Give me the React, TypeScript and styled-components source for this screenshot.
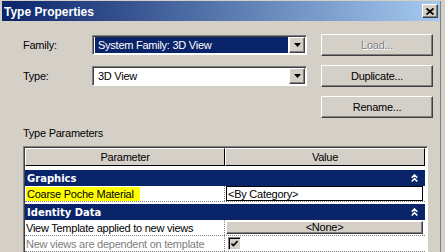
import styled, {createGlobalStyle} from 'styled-components';

const GlobalStyle = createGlobalStyle`
  html, body {
    margin: 0;
    padding: 0;
    background: #d4d0c8;
  }
  body {
    font-family: "Liberation Sans", Arial, sans-serif;
    font-size: 11px;
    letter-spacing: -0.25px;
    color: #000;
  }
`;

const Dialog = styled.div`
  width: 445px;
  height: 252px;
  overflow: hidden;
  background: #d4d0c8;
  padding: 1px 0 0 2px;
  box-sizing: border-box;
`;

const Frame = styled.div`
  width: 439px;
  height: 260px;
  border-right: 1px solid #808080;
  box-sizing: border-box;
`;

const TitleBar = styled.div`
  height: 20px;
  width: 438px;
  display: flex;
  align-items: center;
  justify-content: space-between;
  padding: 0 2px 0 2px;
  box-sizing: border-box;
  background: linear-gradient(to right, #0a246a, #a6caf0);
`;

const TitleText = styled.span`
  color: #fff;
  font-weight: bold;
  font-size: 12px;
  letter-spacing: 0;
  padding-top: 1px;
`;

const raised = `
  background: #d4d0c8;
  border: 1px solid;
  border-color: #fff #404040 #404040 #fff;
  box-shadow: inset -1px -1px #808080;
  box-sizing: border-box;
`;

const CloseButton = styled.div`
  ${raised}
  width: 16px;
  height: 14px;
  display: flex;
  align-items: center;
  justify-content: center;
`;

const Body = styled.div`
  padding: 12px 0 0 21px;
`;

const TopGrid = styled.div`
  display: grid;
  grid-template-columns: 69px 215px 14px 112px;
  grid-auto-rows: 23px;
  row-gap: 8px;
  align-items: center;
`;

const Label = styled.div`
  line-height: 14px;
`;

const Select = styled.div<{$selected?: boolean}>`
  height: 20px;
  display: flex;
  align-items: stretch;
  border: 1px solid;
  border-color: #808080 #fff #fff #808080;
  box-shadow: inset 1px 1px #404040;
  background: #fff;
  box-sizing: border-box;
  padding: 1px 1px 1px 1px;
`;

const SelectValue = styled.div<{$selected?: boolean}>`
  flex: 1;
  display: flex;
  align-items: center;
  padding-left: 3px;
  margin: 0 1px 0 1px;
  background: ${p => (p.$selected ? '#0a246a' : '#fff')};
  color: ${p => (p.$selected ? '#fff' : '#000')};
`;

const DropButton = styled.div`
  ${raised}
  width: 16px;
  display: flex;
  align-items: center;
  justify-content: center;
`;

const PushButton = styled.div<{$disabled?: boolean}>`
  ${raised}
  grid-column: 4;
  height: 22px;
  display: flex;
  align-items: center;
  justify-content: center;
  color: ${p => (p.$disabled ? '#808080' : '#000')};
  text-shadow: ${p => (p.$disabled ? '1px 1px #fff' : 'none')};
`;

const SectionLabel = styled.div`
  margin-top: 8px;
  line-height: 14px;
  height: 14px;
`;

const Table = styled.div`
  margin-top: 6px;
  width: 405px;
  height: 120px;
  border: 1px solid;
  border-color: #808080 #fff #fff #808080;
  box-shadow: inset 1px 1px #404040;
  background: #fff;
  box-sizing: border-box;
  padding: 1px 2px 0 1px;
`;

const HeaderRow = styled.div`
  display: grid;
  grid-template-columns: 200px 200px;
  height: 18px;
`;

const HeaderCell = styled.div`
  background: #d4d0c8;
  border: 1px solid;
  border-color: #fff #000 #000 #fff;
  display: flex;
  align-items: center;
  justify-content: center;
  box-sizing: border-box;
`;

const TableBody = styled.div`
  padding-top: 2px;
`;

const GroupBand = styled.div`
  margin-top: 2px;
  height: 16px;
  background: #0a246a;
  color: #fff;
  display: flex;
  align-items: center;
  justify-content: space-between;
  padding: 0 7px 0 2px;
  font-family: "DejaVu Sans", Verdana, sans-serif;
  font-weight: bold;
  font-size: 10px;
  letter-spacing: 0;
`;

const Row = styled.div`
  display: grid;
  grid-template-columns: 200px 200px;
  height: 16px;
  border-bottom: 1px dotted #808080;
  box-sizing: border-box;
`;

const NameCell = styled.div<{$disabled?: boolean; $marked?: boolean}>`
  display: flex;
  align-items: center;
  padding-left: 1px;
  border-right: 1px dotted #808080;
  color: ${p => (p.$disabled ? '#808080' : '#000')};
  span {
    background: ${p => (p.$marked ? '#ffff00' : 'transparent')};
    padding: 1px 6px 1px 1px;
  }
`;

const ValueCell = styled.div`
  display: flex;
  align-items: center;
  padding: 0 2px 0 1px;
`;

const ValueBox = styled.div`
  flex: 1;
  height: 15px;
  border: 1px solid #000;
  box-sizing: border-box;
  display: flex;
  align-items: center;
  padding-left: 1px;
`;

const ValueButton = styled.div`
  ${raised}
  flex: 1;
  height: 13px;
  display: flex;
  align-items: center;
  justify-content: center;
  margin-top: -1px;
`;

const CheckBox = styled.div`
  width: 13px;
  height: 13px;
  margin-left: 2px;
  border: 1px solid;
  border-color: #808080 #fff #fff #808080;
  box-shadow: inset 1px 1px #000;
  background: #d4d0c8;
  box-sizing: border-box;
  display: flex;
  align-items: center;
  justify-content: center;
`;

const DropArrow = () => (
  <svg width="7" height="4" viewBox="0 0 7 4">
    <path d="M0 0H7L3.5 4Z" fill="#000" />
  </svg>
);

const Collapse = () => (
  <svg width="7" height="8" viewBox="0 0 7 8">
    <path d="M0.7 3.8L3.5 1L6.3 3.8M0.7 7.5L3.5 4.7L6.3 7.5" fill="none" stroke="#fff" strokeWidth="1.6" />
  </svg>
);

function App() {
  return (
    <>
      <GlobalStyle />
      <Dialog>
        <Frame>
          <TitleBar>
            <TitleText>Type Properties</TitleText>
            <CloseButton>
              <svg width="8" height="7" viewBox="0 0 8 7">
                <path d="M0.5 0.5L7.5 6.5M7.5 0.5L0.5 6.5" stroke="#000" strokeWidth="1.8" />
              </svg>
            </CloseButton>
          </TitleBar>
          <Body>
            <TopGrid>
              <Label>Family:</Label>
              <Select>
                <SelectValue $selected>System Family: 3D View</SelectValue>
                <DropButton>
                  <DropArrow />
                </DropButton>
              </Select>
              <div />
              <PushButton $disabled>Load...</PushButton>

              <Label>Type:</Label>
              <Select>
                <SelectValue>3D View</SelectValue>
                <DropButton>
                  <DropArrow />
                </DropButton>
              </Select>
              <div />
              <PushButton>Duplicate...</PushButton>

              <PushButton>Rename...</PushButton>
            </TopGrid>

            <SectionLabel>Type Parameters</SectionLabel>
            <Table>
              <HeaderRow>
                <HeaderCell>Parameter</HeaderCell>
                <HeaderCell>Value</HeaderCell>
              </HeaderRow>
              <TableBody>
                <GroupBand>
                  <span>Graphics</span>
                  <Collapse />
                </GroupBand>
                <Row>
                  <NameCell $marked>
                    <span>Coarse Poche Material</span>
                  </NameCell>
                  <ValueCell>
                    <ValueBox>&lt;By Category&gt;</ValueBox>
                  </ValueCell>
                </Row>
                <GroupBand>
                  <span>Identity Data</span>
                  <Collapse />
                </GroupBand>
                <Row>
                  <NameCell>View Template applied to new views</NameCell>
                  <ValueCell>
                    <ValueButton>&lt;None&gt;</ValueButton>
                  </ValueCell>
                </Row>
                <Row>
                  <NameCell $disabled>New views are dependent on template</NameCell>
                  <ValueCell>
                    <CheckBox>
                      <svg width="7" height="7" viewBox="0 0 7 7">
                        <path d="M0.5 3.5L2.5 5.5L6.5 1" fill="none" stroke="#000" strokeWidth="1.6" />
                      </svg>
                    </CheckBox>
                  </ValueCell>
                </Row>
              </TableBody>
            </Table>
          </Body>
        </Frame>
      </Dialog>
    </>
  );
}

export default App;
